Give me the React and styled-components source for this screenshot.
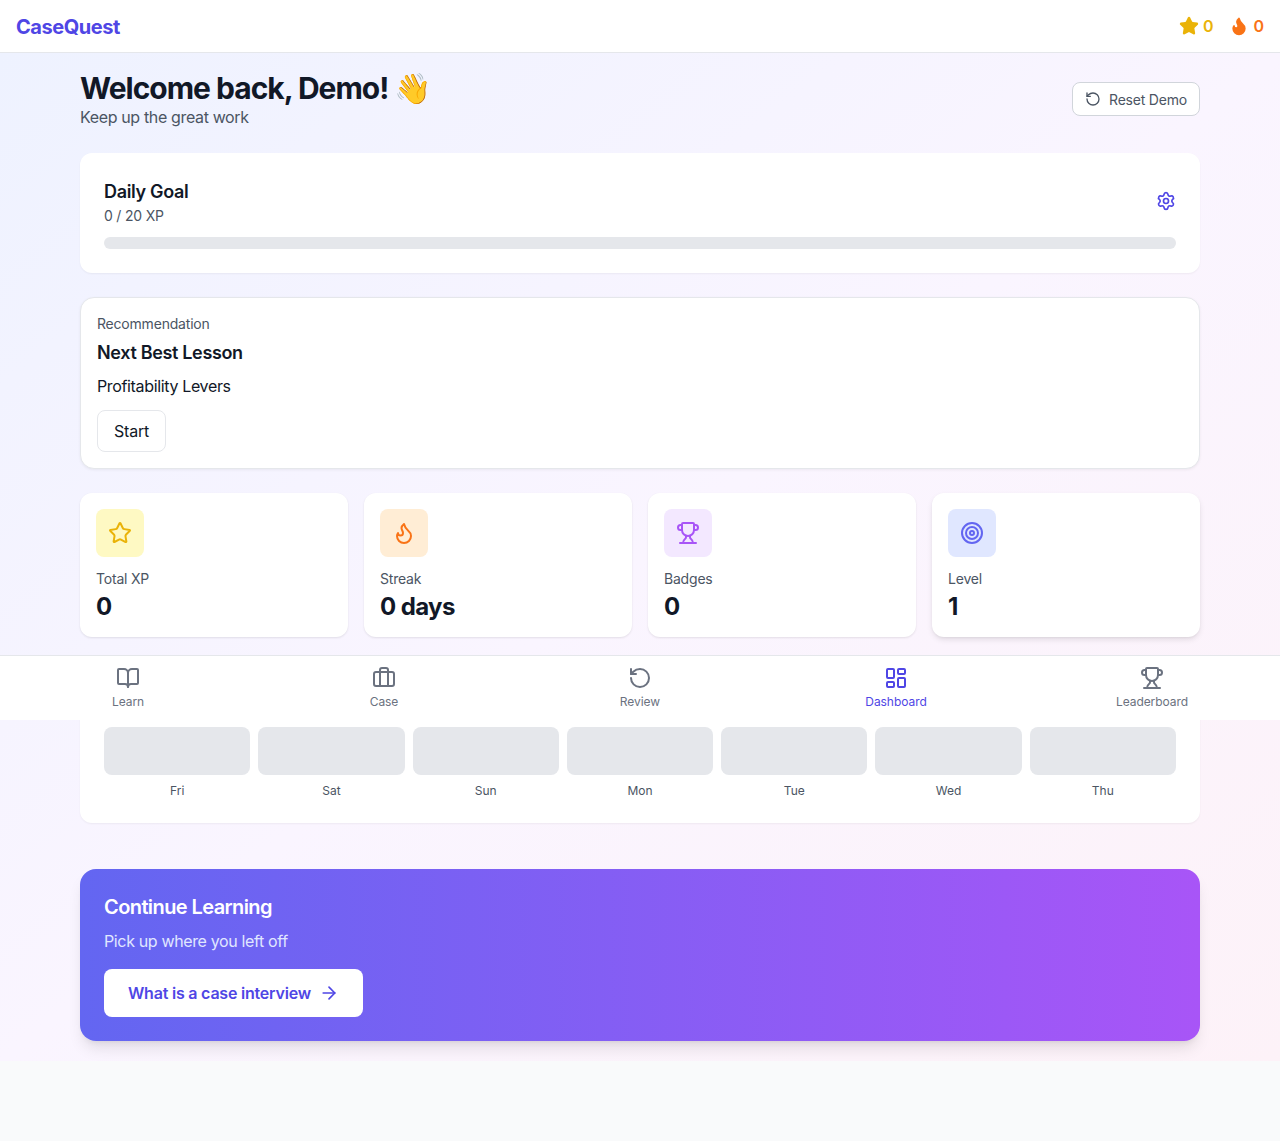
import React from "react";
import styled, { createGlobalStyle } from "styled-components";
import { ArrowRight, BookOpen, Briefcase, Flame, LayoutDashboard, RotateCcw, Settings, Star, Target, Trophy } from "lucide-react";

const GlobalStyle = createGlobalStyle`
  * { box-sizing: border-box; }
  body {
    margin: 0;
    background: #f9fafb;
    color: #111827;
    font-family: Inter, "Liberation Sans", sans-serif;
  }
  button { font-family: inherit; cursor: pointer; }
`;

const Page = styled.div`
  position: relative;
  min-height: 1141px;
  padding-bottom: 80px;
`;

const Header = styled.header`
  height: 53px;
  padding: 0 16px;
  display: flex;
  align-items: center;
  justify-content: space-between;
  background: #fff;
  border-bottom: 1px solid #e5e7eb;
`;

const Logo = styled.div`
  padding-top: 2px;
  font-size: 20px;
  line-height: 28px;
  font-weight: 700;
  letter-spacing: -0.44px;
  color: #4f46e5;
`;

const HeaderStats = styled.div`
  display: flex;
  align-items: center;
  gap: 16px;
`;

const HeaderStat = styled.div`
  display: flex;
  align-items: center;
  gap: 4px;
  font-size: 16px;
  font-weight: 600;
  color: ${p => p.$color};
`;

const Main = styled.main`
  padding: 16px 80px 20px;
  background: linear-gradient(to bottom right, #eef2ff, #faf5ff, #fdf2f8);
`;

const TopRow = styled.div`
  display: flex;
  align-items: center;
  justify-content: space-between;
  margin-bottom: 24px;
`;

const Title = styled.h1`
  margin: 0 0 -2px;
  font-size: 30px;
  line-height: 38px;
  font-weight: 700;
  letter-spacing: -1px;
`;

const Subtitle = styled.p`
  margin: 0;
  font-size: 16px;
  line-height: 24px;
  letter-spacing: -0.36px;
  color: #4b5563;
`;

const ResetButton = styled.button`
  height: 34px;
  padding: 0 12px;
  display: flex;
  align-items: center;
  gap: 8px;
  font-size: 14px;
  letter-spacing: -0.2px;
  color: #4b5563;
  background: #fff;
  border: 1px solid #d1d5db;
  border-radius: 8px;
`;

const Card = styled.section`
  padding: ${p => p.$pt || 24}px 24px 24px;
  margin-bottom: ${p => p.$mb || 24}px;
  background: #fff;
  border-radius: 12px;
  box-shadow: 0 1px 2px rgba(0, 0, 0, 0.05);
`;

const GoalHead = styled.div`
  display: flex;
  align-items: center;
  justify-content: space-between;
  margin-bottom: 12px;
`;

const CardTitle = styled.h2`
  margin: 0 0 -2px;
  font-size: 18px;
  line-height: 30px;
  font-weight: 600;
  letter-spacing: -0.34px;
`;

const SmallText = styled.div`
  font-size: 14px;
  line-height: 20px;
  letter-spacing: -0.2px;
  color: #4b5563;
`;

const GoalText = styled(SmallText)`
  padding-top: 1px;
  margin-bottom: -1px;
`;

const IconButton = styled.button`
  padding: 0;
  display: flex;
  background: none;
  border: 0;
  color: #4f46e5;
`;

const Progress = styled.div`
  height: 12px;
  background: #e5e7eb;
  border-radius: 999px;
`;

const RecCard = styled.section`
  padding: 16px;
  margin-bottom: 24px;
  background: #fff;
  border: 1px solid #e5e7eb;
  border-radius: 14px;
  box-shadow: 0 1px 3px rgba(0, 0, 0, 0.06);
`;

const RecTitle = styled(CardTitle)`
  margin-top: 4px;
`;

const RecLesson = styled.p`
  margin: 8px 0 12px;
  font-size: 16px;
  line-height: 24px;
  letter-spacing: -0.35px;
`;

const StartButton = styled.button`
  height: 42px;
  padding: 0 16px;
  font-size: 16px;
  letter-spacing: -0.2px;
  color: #111827;
  background: #fff;
  border: 1px solid #e5e7eb;
  border-radius: 8px;
`;

const StatGrid = styled.div`
  display: grid;
  grid-template-columns: repeat(4, 1fr);
  gap: 16px;
  margin-bottom: 24px;
`;

const StatCard = styled.div`
  padding: 16px 16px 14px;
  background: #fff;
  border-radius: 12px;
  box-shadow: ${p => p.$raised
    ? "0 3px 6px -1px rgba(0, 0, 0, 0.12), 0 1px 3px -1px rgba(0, 0, 0, 0.08)"
    : "0 1px 2px rgba(0, 0, 0, 0.05), 0 1px 3px rgba(0, 0, 0, 0.05)"};
`;

const StatIcon = styled.div`
  width: 48px;
  height: 48px;
  margin-bottom: 12px;
  display: flex;
  align-items: center;
  justify-content: center;
  border-radius: 8px;
  background: ${p => p.$bg};
  color: ${p => p.$color};
`;

const StatValue = styled.div`
  margin-top: 2px;
  font-size: 24px;
  line-height: 32px;
  font-weight: 700;
  letter-spacing: -0.6px;
`;

const WeekRow = styled.div`
  display: flex;
  gap: 8px;
`;

const Day = styled.div`
  flex: 1;
  text-align: center;
`;

const DayBar = styled.div`
  height: 48px;
  margin-bottom: 8px;
  background: #e5e7eb;
  border-radius: 8px;
`;

const DayLabel = styled.div`
  font-size: 12px;
  line-height: 16px;
  color: #4b5563;
`;

const ContinueCard = styled.section`
  padding: 24px;
  color: #fff;
  background: linear-gradient(to right, #6366f1, #a855f7);
  border-radius: 16px;
  box-shadow: 0 10px 15px -3px rgba(0, 0, 0, 0.1), 0 4px 6px -4px rgba(0, 0, 0, 0.1);
`;

const ContinueTitle = styled.h2`
  margin: 0 0 8px;
  font-size: 20px;
  line-height: 28px;
  font-weight: 600;
  letter-spacing: -0.59px;
`;

const ContinueText = styled.p`
  margin: 0 0 16px;
  font-size: 16px;
  line-height: 24px;
  letter-spacing: -0.36px;
  color: #e0e7ff;
`;

const ContinueButton = styled.button`
  height: 48px;
  padding: 0 24px;
  display: inline-flex;
  align-items: center;
  gap: 8px;
  font-size: 16px;
  font-weight: 600;
  letter-spacing: -0.21px;
  color: #4f46e5;
  background: #fff;
  border: 0;
  border-radius: 8px;
`;

const BottomNav = styled.nav`
  position: absolute;
  top: 655px;
  left: 0;
  right: 0;
  height: 65px;
  display: grid;
  grid-template-columns: repeat(5, 1fr);
  background: #fff;
  border-top: 1px solid #e5e7eb;
`;

const NavItem = styled.a`
  padding-top: 10px;
  display: flex;
  flex-direction: column;
  align-items: center;
  gap: 4px;
  font-size: 12px;
  line-height: 16px;
  letter-spacing: -0.05px;
  color: ${p => (p.$active ? "#4f46e5" : "#6b7280")};
`;

const stats = [
  { label: "Total XP", value: "0", icon: Star, bg: "#fef9c3", color: "#eab308" },
  { label: "Streak", value: "0 days", icon: Flame, bg: "#ffedd5", color: "#f97316" },
  { label: "Badges", value: "0", icon: Trophy, bg: "#f3e8ff", color: "#a855f7" },
  { label: "Level", value: "1", icon: Target, bg: "#e0e7ff", color: "#6366f1", raised: true },
];

const days = ["Fri", "Sat", "Sun", "Mon", "Tue", "Wed", "Thu"];

const navItems = [
  { label: "Learn", icon: BookOpen },
  { label: "Case", icon: Briefcase },
  { label: "Review", icon: RotateCcw },
  { label: "Dashboard", icon: LayoutDashboard, active: true },
  { label: "Leaderboard", icon: Trophy },
];

export default function App() {
  return (
    <Page>
      <GlobalStyle />
      <Header>
        <Logo>CaseQuest</Logo>
        <HeaderStats>
          <HeaderStat $color="#eab308"><Star size={20} fill="currentColor" />0</HeaderStat>
          <HeaderStat $color="#f97316"><Flame size={20} fill="currentColor" />0</HeaderStat>
        </HeaderStats>
      </Header>
      <Main>
        <TopRow>
          <div>
            <Title>Welcome back, Demo! 👋</Title>
            <Subtitle>Keep up the great work</Subtitle>
          </div>
          <ResetButton><RotateCcw size={16} />Reset Demo</ResetButton>
        </TopRow>

        <Card>
          <GoalHead>
            <div>
              <CardTitle>Daily Goal</CardTitle>
              <GoalText>0 / 20 XP</GoalText>
            </div>
            <IconButton><Settings size={20} /></IconButton>
          </GoalHead>
          <Progress />
        </Card>

        <RecCard>
          <SmallText>Recommendation</SmallText>
          <RecTitle>Next Best Lesson</RecTitle>
          <RecLesson>Profitability Levers</RecLesson>
          <StartButton>Start</StartButton>
        </RecCard>

        <StatGrid>
          {stats.map(s => (
            <StatCard key={s.label} $raised={s.raised}>
              <StatIcon $bg={s.bg} $color={s.color}><s.icon size={24} /></StatIcon>
              <SmallText>{s.label}</SmallText>
              <StatValue>{s.value}</StatValue>
            </StatCard>
          ))}
        </StatGrid>

        {/* top of this card sits behind the bottom nav, only the bars show */}
        <Card $pt={66} $mb={46}>
          <WeekRow>
            {days.map(d => (
              <Day key={d}>
                <DayBar />
                <DayLabel>{d}</DayLabel>
              </Day>
            ))}
          </WeekRow>
        </Card>

        <ContinueCard>
          <ContinueTitle>Continue Learning</ContinueTitle>
          <ContinueText>Pick up where you left off</ContinueText>
          <ContinueButton>What is a case interview <ArrowRight size={20} /></ContinueButton>
        </ContinueCard>
      </Main>

      <BottomNav>
        {navItems.map(n => (
          <NavItem key={n.label} $active={n.active}>
            <n.icon size={24} />
            {n.label}
          </NavItem>
        ))}
      </BottomNav>
    </Page>
  );
}
